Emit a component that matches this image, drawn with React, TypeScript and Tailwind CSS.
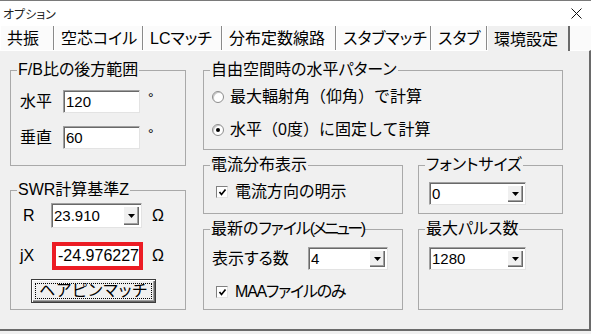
import type { ReactNode } from "react";

const tabs = [
  { label: "共振", w: "w-[54px]" },
  { label: "空芯コイル", w: "w-[89px]" },
  { label: "LCマッチ", w: "w-[79px]" },
  { label: "分布定数線路", w: "w-[114px]" },
  { label: "スタブマッチ", w: "w-[95px]" },
  { label: "スタブ", w: "w-[56px]" },
];

function GroupBox({
  title,
  className,
  children,
}: {
  title: ReactNode;
  className: string;
  children: ReactNode;
}) {
  return (
    <fieldset className={`border border-[#a9a9a9] ${className}`}>
      <legend className="ml-[6px] px-[1px] text-[16px] leading-[18px]">
        {title}
      </legend>
      {children}
    </fieldset>
  );
}

// sunken 3D edit box
function Edit({ value, className }: { value: string; className: string }) {
  return (
    <div
      className={`flex items-center bg-white pl-[2px] text-[15px] leading-none border border-t-[#a0a0a0] border-l-[#a0a0a0] border-r-[#e3e3e3] border-b-[#e3e3e3] shadow-[inset_1px_1px_0_#696969] ${className}`}
    >
      {value}
    </div>
  );
}

function Combo({ value, className }: { value: string; className: string }) {
  return (
    <div
      className={`flex items-stretch bg-white p-[2px] border border-t-[#a0a0a0] border-l-[#a0a0a0] border-r-[#e3e3e3] border-b-[#e3e3e3] shadow-[inset_1px_1px_0_#696969] ${className}`}
    >
      <span className="flex-1 flex items-center text-[15px] leading-none">
        {value}
      </span>
      <span className="w-[16px] flex items-center justify-center bg-[#f0f0f0] shadow-[inset_1px_1px_0_#fff,inset_-1px_-1px_0_#696969,inset_-2px_-2px_0_#a0a0a0]">
        <svg width="7" height="4" viewBox="0 0 7 4">
          <polygon points="0,0 7,0 3.5,4" fill="#000" />
        </svg>
      </span>
    </div>
  );
}

function Radio({ checked, label }: { checked?: boolean; label: string }) {
  return (
    <div className="flex items-center gap-[6px] h-[18px]">
      <span className="w-[12px] h-[12px] rounded-full bg-white border border-[#8d8d8d] shadow-[inset_1px_1px_0_#c8c8c8] flex items-center justify-center">
        {checked && <span className="w-[4px] h-[4px] rounded-full bg-black" />}
      </span>
      <span className="text-[16px] leading-[18px] [font-feature-settings:normal]">
        {label}
      </span>
    </div>
  );
}

function Check({ label, tight }: { label: string; tight?: boolean }) {
  return (
    <div className="flex items-center gap-[7px] h-[18px]">
      <span className="w-[12px] h-[12px] bg-white border border-t-[#808080] border-l-[#808080] border-r-[#e3e3e3] border-b-[#e3e3e3] flex items-center justify-center">
        <svg width="9" height="9" viewBox="0 0 9 9">
          <path d="M1.5 4 L3.5 6.5 L7.5 1.5" stroke="#000" strokeWidth="1.7" fill="none" />
        </svg>
      </span>
      <span
        className={`text-[16px] leading-[18px] ${tight ? "tracking-[-1.2px]" : ""}`}
      >
        {label}
      </span>
    </div>
  );
}

export default function App() {
  return (
    <div className="w-[591px] h-[334px] overflow-hidden bg-[#f0f0f0] text-black font-['Liberation_Sans','Noto_Sans_CJK_JP',sans-serif] [font-feature-settings:'palt']">
      {/* title bar */}
      <div className="h-[26px] bg-white border-t border-[#7a7a7a] flex items-center justify-between pl-[3px] pr-[9px]">
        <span className="text-[12px] leading-none font-['Noto_Sans_CJK_JP',sans-serif] text-[#222]">
          オプション
        </span>
        <svg width="11" height="11" viewBox="0 0 11 11">
          <path d="M0.5 0.5 L10.5 10.5 M10.5 0.5 L0.5 10.5" stroke="#111" strokeWidth="1" />
        </svg>
      </div>

      {/* tabs */}
      <div className="h-[24px] flex items-start bg-[#fafafa]">
        {tabs.map((t) => (
          <div
            key={t.label}
            className={`${t.w} h-[24px] pl-[6px] pt-[2px] flex items-center whitespace-nowrap overflow-hidden text-[16px] leading-[18px] border-l border-white border-r border-r-[#8a8a8a] bg-[#fbfbfb]`}
          >
            {t.label}
          </div>
        ))}
        <div className="relative z-10 w-[83px] h-[25px] pl-[6px] pt-[2px] flex items-center whitespace-nowrap text-[16px] leading-[18px] bg-[#f0f0f0] border-l border-white border-r-2 border-r-[#6a6a6a]">
          環境設定
        </div>
      </div>

      {/* page */}
      <div className="h-[281px] border-t border-white border-r-2 border-r-[#6a6a6a] border-b-2 border-b-[#6a6a6a] flex gap-[17px] pl-[10px] pt-[10px]">
        {/* left column */}
        <div className="w-[176px] flex flex-col gap-[15px]">
          <GroupBox title="F/B比の後方範囲" className="h-[105px]">
            <div className="flex flex-col gap-[13px] pt-[11px] pl-[9px]">
              <div className="flex items-start h-[23px]">
                <span className="w-[43px] self-center text-[16px] leading-[18px]">水平</span>
                <Edit value="120" className="w-[77px] h-[23px]" />
                <span className="ml-[8px] mt-[1px] text-[14px] leading-none">°</span>
              </div>
              <div className="flex items-start h-[23px]">
                <span className="w-[43px] self-center text-[16px] leading-[18px]">垂直</span>
                <Edit value="60" className="w-[77px] h-[23px]" />
                <span className="ml-[8px] mt-[1px] text-[14px] leading-none">°</span>
              </div>
            </div>
          </GroupBox>

          <GroupBox title="SWR計算基準Z" className="h-[129px]">
            <div className="flex flex-col pt-[4px]">
              <div className="flex items-center h-[25px]">
                <span className="w-[40px] pl-[12px] text-[16px] leading-[18px]">R</span>
                <Combo value="23.910" className="w-[91px] h-[25px]" />
                <span className="ml-[10px] text-[16px] leading-[18px]">Ω</span>
              </div>
              <div className="flex items-center h-[28px] mt-[14px]">
                <span className="w-[41px] pl-[9px] text-[16px] leading-[18px]">jX</span>
                <div className="w-[91px] h-[28px] border-4 border-[#ec1c24] bg-white flex items-center justify-end overflow-hidden text-[16px] leading-none whitespace-nowrap">
                  -24.976227
                </div>
                <span className="ml-[9px] text-[16px] leading-[18px]">Ω</span>
              </div>
              <div className="mt-[9px] pl-[20px]">
                <button className="w-[125px] h-[24px] border border-[#3c3c3c] bg-[#f0f0f0] p-[3px] shadow-[inset_1px_1px_0_#fff,inset_-1px_-1px_0_#696969,inset_-2px_-2px_0_#a0a0a0]">
                  <span className="flex h-full w-full items-center justify-center border border-dotted border-black text-[16px] leading-[18px] tracking-[1px]">
                    ヘアピンマッチ
                  </span>
                </button>
              </div>
            </div>
          </GroupBox>
        </div>

        {/* right column */}
        <div className="w-[360px] flex flex-col gap-[6px]">
          <GroupBox title="自由空間時の水平パターン" className="h-[89px]">
            <div className="flex flex-col gap-[15px] pt-[9px] pl-[8px]">
              <Radio label="最大輻射角（仰角）で計算" />
              <Radio checked label="水平（0度）に固定して計算" />
            </div>
          </GroupBox>

          <div className="flex gap-[15px]">
            <GroupBox title="電流分布表示" className="w-[200px] h-[58px]">
              <div className="pt-[9px] pl-[12px]">
                <Check label="電流方向の明示" />
              </div>
            </GroupBox>
            <GroupBox title="フォントサイズ" className="w-[145px] h-[58px]">
              <div className="pt-[8px] pl-[10px]">
                <Combo value="0" className="w-[97px] h-[23px]" />
              </div>
            </GroupBox>
          </div>

          <div className="flex gap-[15px]">
            <GroupBox
              title={
                <>
                  最新の<span className="tracking-[-1px]">ファイル</span>
                  <span className="tracking-[-2.5px]">(メニュー)</span>
                </>
              }
              className="w-[200px] h-[90px]"
            >
              <div className="flex flex-col gap-[13px] pt-[9px] pl-[8px]">
                <div className="flex items-center h-[23px]">
                  <span className="w-[96px] text-[16px] leading-[18px]">表示する数</span>
                  <Combo value="4" className="w-[80px] h-[23px]" />
                </div>
                <div className="pl-[4px]">
                  <Check tight label="MAAファイルのみ" />
                </div>
              </div>
            </GroupBox>
            <GroupBox title="最大パルス数" className="w-[145px] h-[90px]">
              <div className="pt-[9px] pl-[10px]">
                <Combo value="1280" className="w-[97px] h-[23px]" />
              </div>
            </GroupBox>
          </div>
        </div>
      </div>
    </div>
  );
}
